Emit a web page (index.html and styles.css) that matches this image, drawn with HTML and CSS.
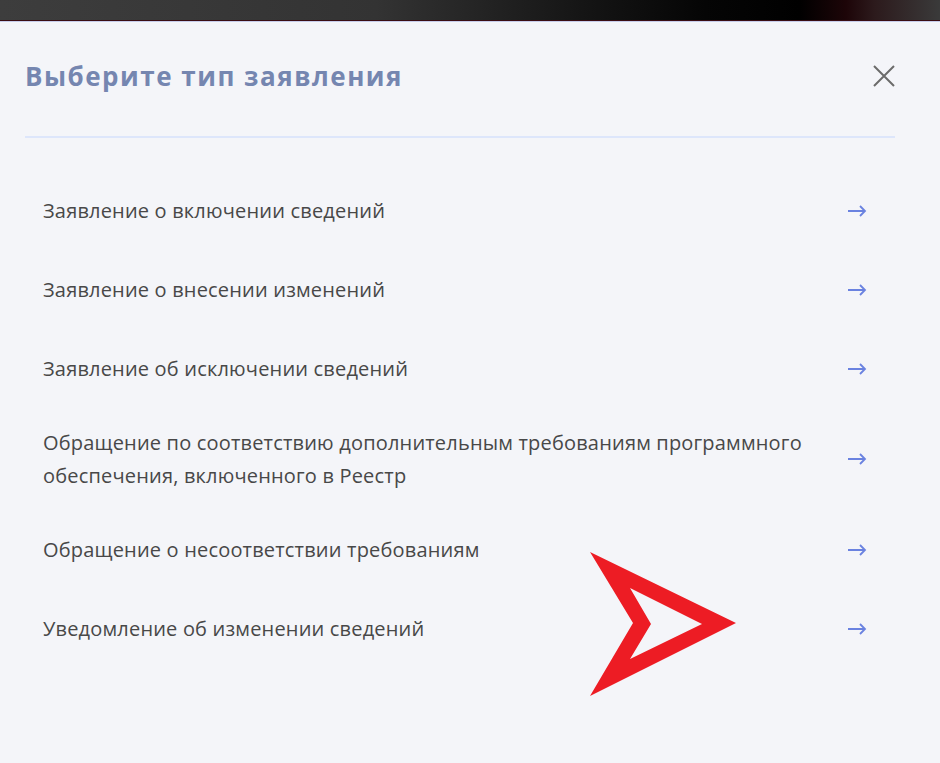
FILE: index.html
```html
<!DOCTYPE html>
<html lang="ru">
<head>
<meta charset="utf-8">
<title>Выберите тип заявления</title>
<link rel="stylesheet" href="styles.css">
</head>
<body>
<div class="topbar"></div>
<div class="modal">
  <div class="header">
    <h1 class="title">Выберите тип заявления</h1>
    <button class="close" aria-label="Закрыть">
      <svg width="22" height="22" viewBox="0 0 22 22"><path d="M1 1L21 21M21 1L1 21" stroke="#6b6b6b" stroke-width="2" fill="none"/></svg>
    </button>
  </div>
  <ul class="list">
    <li class="item"><span class="label">Заявление о включении сведений</span><svg class="arrow" width="20" height="12" viewBox="0 0 20 12"><path d="M1 6H18M13 1L18 6L13 11" stroke="#6a82e0" stroke-width="1.8" fill="none"/></svg></li>
    <li class="item"><span class="label">Заявление о внесении изменений</span><svg class="arrow" width="20" height="12" viewBox="0 0 20 12"><path d="M1 6H18M13 1L18 6L13 11" stroke="#6a82e0" stroke-width="1.8" fill="none"/></svg></li>
    <li class="item"><span class="label">Заявление об исключении сведений</span><svg class="arrow" width="20" height="12" viewBox="0 0 20 12"><path d="M1 6H18M13 1L18 6L13 11" stroke="#6a82e0" stroke-width="1.8" fill="none"/></svg></li>
    <li class="item"><span class="label">Обращение по соответствию дополнительным требованиям программного обеспечения, включенного в Реестр</span><svg class="arrow" width="20" height="12" viewBox="0 0 20 12"><path d="M1 6H18M13 1L18 6L13 11" stroke="#6a82e0" stroke-width="1.8" fill="none"/></svg></li>
    <li class="item"><span class="label">Обращение о несоответствии требованиям</span><svg class="arrow" width="20" height="12" viewBox="0 0 20 12"><path d="M1 6H18M13 1L18 6L13 11" stroke="#6a82e0" stroke-width="1.8" fill="none"/></svg></li>
    <li class="item"><span class="label">Уведомление об изменении сведений</span><svg class="arrow" width="20" height="12" viewBox="0 0 20 12"><path d="M1 6H18M13 1L18 6L13 11" stroke="#6a82e0" stroke-width="1.8" fill="none"/></svg></li>
  </ul>
  <svg class="pointer" width="150" height="150" viewBox="0 0 150 150"><path fill="#ed1c24" fill-rule="evenodd" d="M0 1L146 72L0 145L43 72Z M40 37L61 73L40 108L112 73Z"/></svg>
</div>
</body>
</html>
```

FILE: styles.css
```css
html, body {
  margin: 0;
  padding: 0;
  background: #f4f5f9;
}
body {
  width: 940px;
  height: 763px;
  overflow: hidden;
  font-family: "Open Sans", "Noto Sans", sans-serif;
}
.topbar {
  height: 20px;
  background: linear-gradient(90deg, #3d3d3d 0%, #333 40%, #151515 62%, #050505 75%, #000 85%, #1d0508 90%, #2c1a1c 93%, #3a3a3a 100%);
  border-bottom: 1px solid #3a0d14;
  box-shadow: 0 1px 0 #c7cdec;
}
.modal {
  position: relative;
  padding: 0 45px 0 25px;
}
.header {
  display: flex;
  align-items: flex-start;
  justify-content: space-between;
  box-sizing: border-box;
  height: 117px;
  padding-top: 39px;
  border-bottom: 2px solid #dde6fb;
}
.title {
  margin: 0;
  font-size: 26px;
  line-height: 32px;
  font-weight: 700;
  color: #7586b0;
  letter-spacing: 1.5px;
}
.close {
  border: 0;
  background: none;
  padding: 0;
  margin-top: 5px;
  display: flex;
}
.list {
  list-style: none;
  margin: 0;
  padding: 33px 0 0 18px;
}
.item {
  display: flex;
  align-items: center;
  justify-content: space-between;
  min-height: 79px;
  box-sizing: border-box;
  padding: 18px 0;
}
.label {
  font-size: 20px;
  line-height: 33px;
  letter-spacing: 0.18px;
  color: #484848;
  max-width: 780px;
}
.arrow {
  flex: none;
  margin-right: 28px;
}
.pointer {
  position: absolute;
  left: 590px;
  top: 530px;
}
```
